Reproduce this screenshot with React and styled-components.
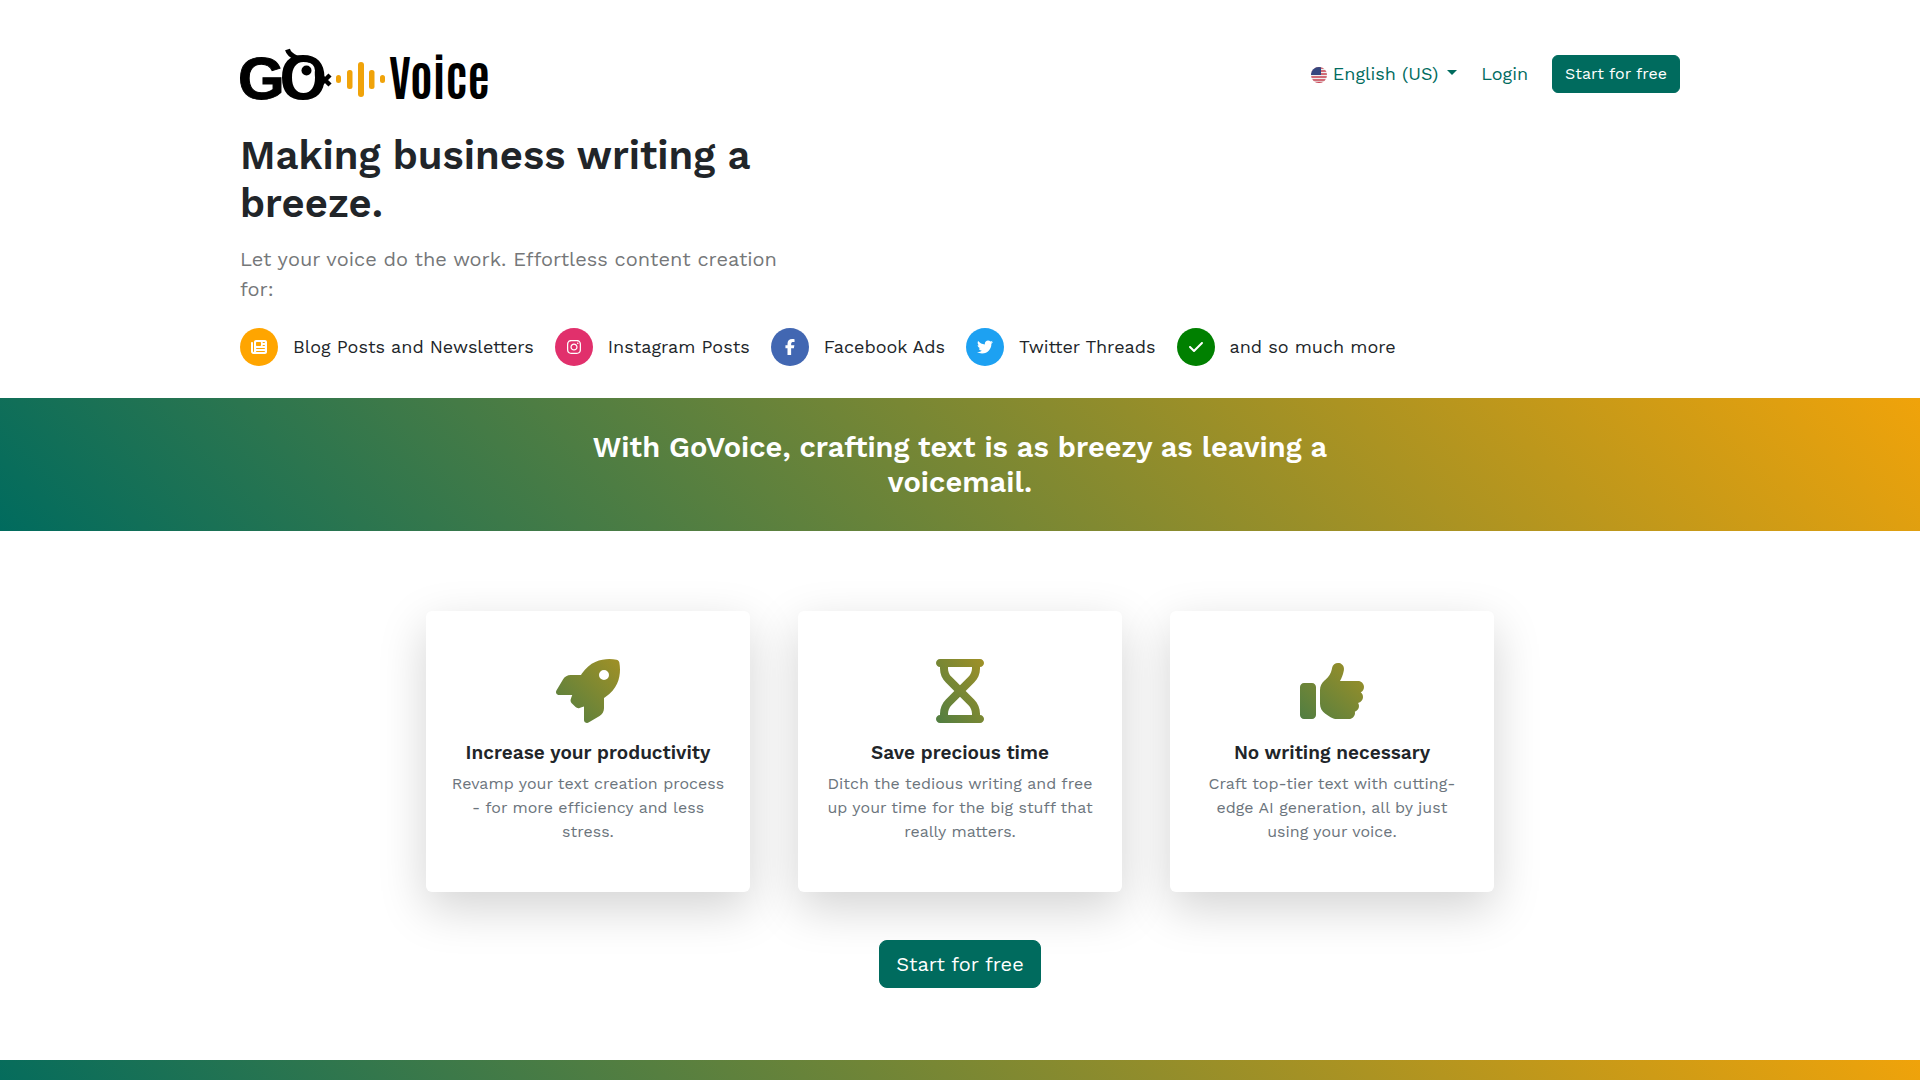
import React from "react";
import styled, { createGlobalStyle } from "styled-components";
import {
  FaCheck,
  FaFacebookF,
  FaHourglass,
  FaInstagram,
  FaNewspaper,
  FaRocket,
  FaThumbsUp,
  FaTwitter,
} from "react-icons/fa6";

const teal = "#006b5e";
const amber = "#f0a30a";

const GlobalStyle = createGlobalStyle`
  *, *::before, *::after { box-sizing: border-box; }
  body {
    margin: 0;
    background: #fff;
    color: #212529;
    font-family: "Work Sans", Inter, "Noto Sans", sans-serif;
    font-size: 18px;
    line-height: 26px;
    overflow-x: hidden;
  }
  h1, h2, h3, p, ul { margin: 0; padding: 0; }
`;

const Container = styled.div`
  width: 75%;
  min-width: 1200px;
  margin: 0 auto;
`;

const Header = styled.header`
  display: flex;
  align-items: center;
  justify-content: space-between;
  padding: 48px 0 32px;
`;

const HomeLink = styled.a`
  display: block;
  height: 52px;

  & > svg {
    display: block;
    overflow: visible;
  }
`;

const Nav = styled.nav`
  display: flex;
  align-items: center;
  gap: 24px;
`;

const LanguageButton = styled.button`
  padding: 0;
  border: 0;
  background: none;
  color: ${teal};
  font: inherit;
  white-space: nowrap;
  cursor: pointer;
`;

const Flag = styled.svg`
  width: 16px;
  height: 16px;
  margin-right: 6px;
  vertical-align: -3px;
`;

const Caret = styled.span`
  display: inline-block;
  margin-left: 9px;
  border: 5px solid transparent;
  border-top-color: ${teal};
  border-bottom: 0;
  vertical-align: 5px;
`;

const NavLink = styled.a`
  color: ${teal};
  text-decoration: none;
`;

const Button = styled.button`
  padding: ${(p) => (p.$large ? "8px 16px" : "6px 12px")};
  border: 1px solid ${teal};
  border-radius: ${(p) => (p.$large ? 8 : 6)}px;
  background: ${teal};
  color: #fff;
  font-family: inherit;
  font-size: ${(p) => (p.$large ? 20 : 16)}px;
  line-height: ${(p) => (p.$large ? 30 : 24)}px;
  cursor: pointer;
`;

const Intro = styled.div`
  width: 40%;
  min-width: 560px;
`;

const Title = styled.h1`
  font-size: 40px;
  font-weight: 600;
  line-height: 48px;
`;

const Lead = styled.p`
  && {
    margin-top: 16px;
  }
  color: #757779;
  font-size: 20px;
  line-height: 30px;
`;

const FormatList = styled.ul`
  && {
    display: flex;
    gap: 21px;
    padding: 24px 0 32px;
    list-style: none;
  }
`;

const Format = styled.li`
  display: flex;
  align-items: center;
  gap: 15px;
  white-space: nowrap;
`;

const Badge = styled.span`
  display: grid;
  place-items: center;
  width: 38px;
  height: 38px;
  border-radius: 50%;
  background: ${(p) => p.$color};
  color: #fff;
  font-size: 16px;
`;

const Band = styled.section`
  display: flex;
  justify-content: center;
  padding: 32px 0 31px;
  background: linear-gradient(45deg, ${teal}, ${amber});
  color: #fff;
  text-align: center;
`;

const BandTitle = styled.h2`
  width: 744px;
  font-size: 29px;
  font-weight: 600;
  line-height: 35px;
`;

const Benefits = styled.section`
  display: flex;
  flex-direction: column;
  align-items: center;
  gap: 48px;
  padding: 80px 0 72px;
`;

const CardRow = styled.div`
  display: grid;
  grid-template-columns: repeat(3, 324px);
  gap: 48px;
`;

const Card = styled.article`
  padding: 48px 24px;
  border-radius: 6px;
  background: #fff;
  box-shadow: 0 16px 48px rgba(0, 0, 0, 0.176);
  text-align: center;

  & > svg {
    display: block;
    height: 64px;
    width: 64px;
    margin: 0 auto;
  }
  & > svg path {
    fill: url(#brand-gradient);
  }
`;

const CardTitle = styled.h3`
  && {
    margin: 17px 0 7px;
  }
  font-size: 19px;
  font-weight: 600;
  line-height: 25px;
`;

const CardText = styled.p`
  color: #6c757d;
  font-size: 16px;
  line-height: 24px;
`;

const Defs = styled.svg`
  position: absolute;
`;

const LogoText = styled.text`
  font-family: ${(p) => p.$family};
  font-size: ${(p) => p.$size}px;
  font-weight: ${(p) => p.$weight};
`;

function Logo() {
  return (
    <svg width="247" height="52" viewBox="0 0 247 52" role="img" aria-label="GoVoice">
      <LogoText x="-2" y="51" $family='"Liberation Sans", sans-serif' $size={60} $weight={700} stroke="#000">G</LogoText>
      <path
        fillRule="evenodd"
        d="M63 7C77 7 84.500 15 84.500 29.500S77 52 63 52S42 44 42 29.500S49 7 63 7ZM63.500 14C56 14 52 20 52 29.500S56 45 63.500 45S75 39 75 29.500S71 14 63.500 14Z"
      />
      <circle cx="67" cy="22.500" r="8" fill="#fff" />
      <circle cx="66.500" cy="22.500" r="5" />
      <path d="M47.500 1.500Q49 7 57 10" fill="none" stroke="#000" strokeWidth="5" />
      <path d="M81 28L90 37M81 36L90 27" stroke="#000" strokeWidth="4.500" />
      <g fill={amber}>
        <rect x="96" y="27" width="5" height="8" rx="2.500" />
        <rect x="107" y="22" width="5.500" height="19" rx="2.500" />
        <rect x="118" y="14" width="6" height="35" rx="3" />
        <rect x="129" y="22" width="5.500" height="19" rx="2.500" />
        <rect x="140" y="27" width="5" height="8" rx="2.500" />
      </g>
      <LogoText x="149" y="51" $family='Antonio, "Barlow Condensed", "Roboto Condensed", Roboto, sans-serif' $size={48} $weight={700}>Voice</LogoText>
    </svg>
  );
}

function UsFlag() {
  return (
    <Flag viewBox="0 0 16 16" aria-hidden="true">
      <clipPath id="flag-circle">
        <circle cx="8" cy="8" r="8" />
      </clipPath>
      <g clipPath="url(#flag-circle)">
        <rect width="16" height="16" fill="#eee" />
        <path d="M0 1h16M0 4h16M0 7h16M0 10h16M0 13h16M0 15.500h16" stroke="#c8404f" strokeWidth="1.300" />
        <rect width="10" height="8" fill="#35467f" />
      </g>
    </Flag>
  );
}

const formats = [
  { label: "Blog Posts and Newsletters", color: "#ffa500", Icon: FaNewspaper },
  { label: "Instagram Posts", color: "#e1306c", Icon: FaInstagram },
  { label: "Facebook Ads", color: "#4267b2", Icon: FaFacebookF },
  { label: "Twitter Threads", color: "#1da1f2", Icon: FaTwitter },
  { label: "and so much more", color: "#008000", Icon: FaCheck },
];

const benefits = [
  {
    title: "Increase your productivity",
    text: "Revamp your text creation process - for more efficiency and less stress.",
    Icon: FaRocket,
  },
  {
    title: "Save precious time",
    text: "Ditch the tedious writing and free up your time for the big stuff that really matters.",
    Icon: FaHourglass,
  },
  {
    title: "No writing necessary",
    text: "Craft top-tier text with cutting-edge AI generation, all by just using your voice.",
    Icon: FaThumbsUp,
  },
];

export default function App() {
  return (
    <>
      <GlobalStyle />
      <Defs width="0" height="0" aria-hidden="true">
        <linearGradient id="brand-gradient" x1="-1" y1="2" x2="2" y2="-1">
          <stop offset="0" stopColor={teal} />
          <stop offset="1" stopColor={amber} />
        </linearGradient>
      </Defs>
      <Container>
        <Header>
          <HomeLink href="#"><Logo /></HomeLink>
          <Nav>
            <LanguageButton type="button">
              <UsFlag />
              English (US)
              <Caret />
            </LanguageButton>
            <NavLink href="#login">Login</NavLink>
            <Button type="button">Start for free</Button>
          </Nav>
        </Header>
        <Intro>
          <Title>Making business writing a breeze.</Title>
          <Lead>Let your voice do the work. Effortless content creation for:</Lead>
        </Intro>
        <FormatList>
          {formats.map(({ label, color, Icon }) => (
            <Format key={label}>
              <Badge $color={color}><Icon /></Badge>
              {label}
            </Format>
          ))}
        </FormatList>
      </Container>
      <Band>
        <BandTitle>With GoVoice, crafting text is as breezy as leaving a voicemail.</BandTitle>
      </Band>
      <Benefits>
        <CardRow>
          {benefits.map(({ title, text, Icon }) => (
            <Card key={title}>
              <Icon />
              <CardTitle>{title}</CardTitle>
              <CardText>{text}</CardText>
            </Card>
          ))}
        </CardRow>
        <Button type="button" $large>Start for free</Button>
      </Benefits>
      <Band />
    </>
  );
}
